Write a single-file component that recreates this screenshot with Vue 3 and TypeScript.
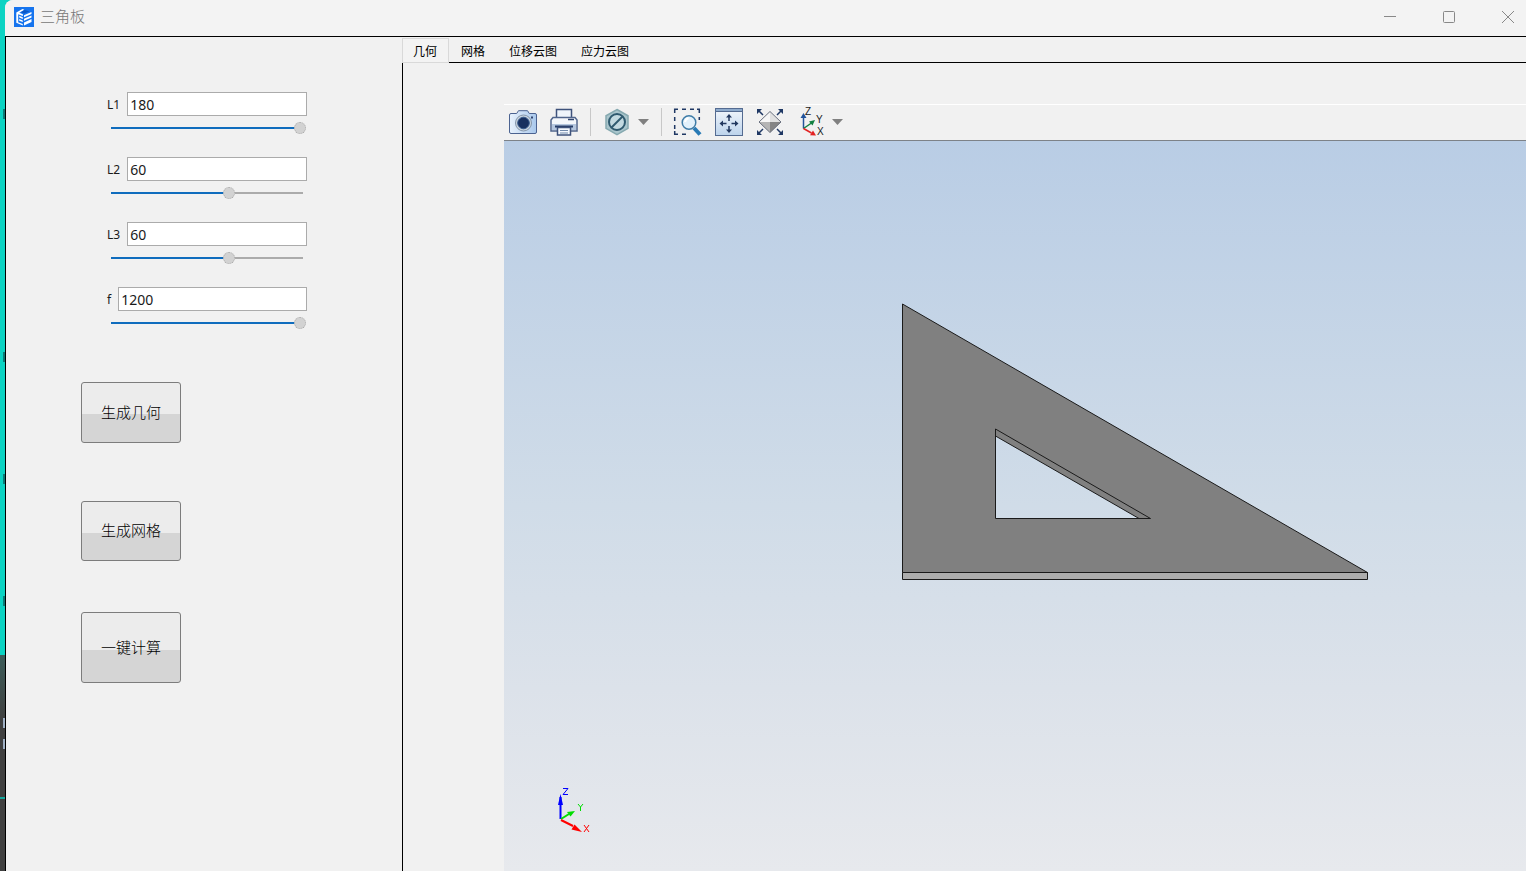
<script setup lang="ts">
import { reactive, ref } from 'vue'

interface Param {
  id: string
  value: number
  min: number
  max: number
}

const params = reactive<Param[]>([
  { id: 'L1', value: 180, min: 0, max: 180 },
  { id: 'L2', value: 60, min: 5, max: 95 },
  { id: 'L3', value: 60, min: 5, max: 95 },
  { id: 'f', value: 1200, min: 0, max: 1200 },
])

const tabs = ['几何', '网格', '位移云图', '应力云图']
const activeTab = ref(0)

const percent = (p: Param): string =>
  Math.round(((p.value - p.min) / (p.max - p.min)) * 100) + '%'
</script>

<template>
  <div class="desktop">
    <div class="backdrop" aria-hidden="true">
      <i class="mark m1"></i><i class="mark m2"></i><i class="mark m3"></i><i class="mark m4"></i>
      <i class="mark light m5"></i><i class="mark light m6"></i><i class="stripe"></i>
    </div>
    <div class="window">
      <header class="titlebar">
        <svg class="logo" viewBox="0 0 20 20" aria-hidden="true">
          <rect width="20" height="20" fill="#1674ee" />
          <path d="M2.300 5.600 8.500 2l1.800.8-5 3 3.600 1.400V9L4.200 7.200v8l4.600 1.900v1.500l-6.500-2.800z" fill="#fff" />
          <path d="m5.200 8.800 3.600 1.400v1.700l-3.600-1.400zM5.200 12l3.600 1.400v1.700l-3.600-1.400z" fill="#fff" />
          <path d="M10 8.200 17.500 5v2L10 10.200zM10 11.800l7.500-3.300v2L10 13.800zM10 15.500l7.500-3.500v3L10 18.400z" fill="#fff" />
          <path d="m10.500 3 5 1.200-5.200 2.200-3.500-1.100z" fill="#0b57c5" />
        </svg>
        <h1>三角板</h1>
        <div class="controls">
          <button type="button" aria-label="最小化">
            <svg viewBox="0 0 12 12"><path d="M0 5.500h12" /></svg>
          </button>
          <button type="button" aria-label="最大化">
            <svg viewBox="0 0 12 12"><rect x=".5" y=".5" width="11" height="11" rx="1" /></svg>
          </button>
          <button type="button" aria-label="关闭">
            <svg viewBox="0 0 12 12"><path d="m0 0 12 12M12 0 0 12" /></svg>
          </button>
        </div>
      </header>

      <div class="body">
        <aside class="panel">
          <div class="fields">
            <div v-for="p in params" :key="p.id" class="field">
              <div class="entry">
                <label :for="p.id">{{ p.id }}</label>
                <input :id="p.id" v-model.number="p.value" type="text" />
              </div>
              <input
                v-model.number="p.value"
                class="slider"
                type="range"
                :min="p.min"
                :max="p.max"
                :aria-label="p.id"
                :style="{ '--fill': percent(p) }"
              />
            </div>
          </div>
          <button type="button" class="action geometry">生成几何</button>
          <button type="button" class="action mesh">生成网格</button>
          <button type="button" class="action solve">一键计算</button>
        </aside>

        <main class="content">
          <nav class="tabs">
            <button
              v-for="(t, i) in tabs"
              :key="t"
              type="button"
              :class="{ active: i === activeTab }"
              @click="activeTab = i"
            >{{ t }}</button>
          </nav>
          <section class="page">
            <div class="viewer">
              <div class="toolbar">
                <div class="group">
                  <button type="button" aria-label="截图">
                    <svg viewBox="0 0 28 28">
                      <defs>
                        <linearGradient id="cam" x1="0" x2="1"><stop offset="0" stop-color="#e8f2fd" /><stop offset="1" stop-color="#a9c8ec" /></linearGradient>
                      </defs>
                      <path d="M2 5.500h5.700l1.800-2.800h9l1.800 2.800H26q1.500 0 1.500 1.500v17q0 1.500-1.500 1.500H2Q.5 25.500.5 24V7Q.5 5.500 2 5.500z" fill="url(#cam)" stroke="#4c6391" />
                      <circle cx="14.500" cy="15" r="8" fill="#c9d4df" stroke="#8496ab" />
                      <circle cx="14.500" cy="15" r="5.800" fill="#18305f" stroke="#35598c" />
                      <rect x="22" y="8.500" width="2" height="2" fill="#33466f" />
                    </svg>
                  </button>
                  <button type="button" aria-label="打印">
                    <svg viewBox="0 0 28 28">
                      <path d="M6.500 10V1.500h15V10" fill="#eef4fb" stroke="#3e527b" stroke-width="1.500" />
                      <path d="M3 9.500h22l2 2.500v11H1V12z" fill="#f4f7fb" stroke="#50658c" stroke-width="1.500" />
                      <path d="M2 16h24v6H2z" fill="#b5c7df" />
                      <path d="M18 11.500h6" stroke="#30466f" stroke-width="1.500" />
                      <path d="M5 18.500h18" stroke="#263d68" stroke-width="2" />
                      <path d="M7.500 19.500h13V27h-13z" fill="#f4f8fd" stroke="#3e527b" stroke-width="1.500" />
                      <path d="M10 22.500h8M10 25h8" stroke="#7189aa" />
                    </svg>
                  </button>
                </div>
                <span class="sep"></span>
                <div class="group tight">
                  <button type="button" aria-label="显示模式">
                    <svg viewBox="0 0 28 28">
                      <path d="m14 1.500 11 6.300v12.600L14 26.700 3 20.400V7.800z" fill="#a9c5cc" stroke="#86a9b0" stroke-width="1.500" />
                      <circle cx="14" cy="14" r="8" fill="#c3dae1" stroke="#2f5a6f" stroke-width="2" />
                      <path d="m8.500 19.500 11-11" stroke="#2f5a6f" stroke-width="2" />
                    </svg>
                  </button>
                  <button type="button" class="drop" aria-label="更多显示模式">
                    <svg viewBox="0 0 11 28"><path d="M0 11h11l-5.500 6z" fill="#808080" /></svg>
                  </button>
                </div>
                <span class="sep"></span>
                <div class="group">
                  <button type="button" aria-label="框选缩放">
                    <svg viewBox="0 0 28 28">
                      <path d="M.7 5V1.200H4M8 1.200h4M16 1.200h4M23 1.200h2.300V5M.7 9v4M.7 17v4M25.300 9v3M.7 23v3.300H4M8 26.300h4" fill="none" stroke="#1f3864" stroke-width="1.500" />
                      <path d="m20 20 6 6.500" stroke="#287ab5" stroke-width="4" />
                      <circle cx="15" cy="14.500" r="6.800" fill="#e2f1fb" stroke="#3f7ca7" stroke-width="1.500" />
                      <path d="M11 14q.5-3 3.500-4" stroke="#fff" stroke-width="2" fill="none" />
                    </svg>
                  </button>
                  <button type="button" aria-label="适应窗口">
                    <svg viewBox="0 0 28 28">
                      <defs>
                        <linearGradient id="fit" x2="0" y2="1"><stop offset="0" stop-color="#f3f7fc" /><stop offset="1" stop-color="#bcd3ec" /></linearGradient>
                      </defs>
                      <rect x=".5" y=".5" width="27" height="27" fill="url(#fit)" stroke="#546b91" />
                      <path d="M.5.5h27v3H.5z" fill="#8daacc" stroke="#546b91" />
                      <path d="M14 13V9M14 18v4M11.500 15.500H7M16.500 15.500H21" stroke="#22385f" stroke-width="1.500" />
                      <path d="m14 6 3 3.500h-6zM14 25l3-3.500h-6zM4.500 15.500 8 12.500v6zM23.500 15.500l-3.500-3v6z" fill="#22385f" />
                    </svg>
                  </button>
                  <button type="button" aria-label="等轴视图">
                    <svg viewBox="0 0 28 28">
                      <path d="m2 2 5 5M26 2l-5 5M2 26l5-5M26 26l-5-5" stroke="#1f3864" stroke-width="1.500" />
                      <path d="M1 1h5L1 6zM27 1h-5l5 5zM1 27h5l-5-5zM27 27h-5l5-5z" fill="#1f3864" />
                      <path d="m14 3.500 11 10.500-11 10.500L3 14z" fill="#e0e0e0" />
                      <path d="M14 3.500V14H3z" fill="#f6f6f6" /><path d="M3 14h11v10.500z" fill="#b5b5b5" /><path d="M14 14h11L14 24.500z" fill="#858585" />
                      <path d="m14 3.500 11 10.500-11 10.500L3 14z" fill="none" stroke="#6c7280" />
                    </svg>
                  </button>
                  <div class="group tight">
                    <button type="button" aria-label="坐标轴视图">
                      <svg viewBox="0 0 28 28">
                        <path d="M6.500 20.500V8" stroke="#23549c" stroke-width="1.500" /><path d="m6.500 5 3 5h-6z" fill="#23549c" />
                        <path d="m6.500 20.500 8-5.500" stroke="#118040" stroke-width="1.500" /><path d="m18 12-2.500 5.500-3.500-4z" fill="#118040" />
                        <path d="m6.500 20.500 8 4.500" stroke="#e32222" stroke-width="1.500" /><path d="m19 27.500-6-.3 3-4.700z" fill="#e32222" />
                        <g class="axis-name"><text x="8" y="7">Z</text><text x="19" y="15">Y</text><text x="20" y="27">X</text></g>
                      </svg>
                    </button>
                    <button type="button" class="drop" aria-label="更多视图">
                      <svg viewBox="0 0 11 28"><path d="M0 11h11l-5.500 6z" fill="#808080" /></svg>
                    </button>
                  </div>
                </div>
              </div>

              <div class="scene">
                <svg class="model" viewBox="0 0 1022 730" role="img" aria-label="三角板">
                  <g stroke="#1a1a1a" stroke-linejoin="round">
                    <path d="M398.500 431.500h465v7h-465z" fill="#adadad" />
                    <path d="M398.500 163v268.500h465zM491.500 295l143.500 82.500H491.500z" fill="#808080" fill-rule="evenodd" />
                    <path d="M491.500 295v-7l155 89.500H635" fill="none" />
                  </g>
                </svg>
                <svg class="triad" viewBox="0 0 40 50" aria-hidden="true">
                  <path d="M7.500 34V12" stroke="#00f" stroke-width="2" /><path d="M7.500 9 10 20H5z" fill="#00f" />
                  <path d="m8 34 8-5" stroke="#0d0" stroke-width="2" /><path d="m22 26-4.500 5.500-3.500-4.500z" fill="#0d0" />
                  <path d="m8 35 12 6" stroke="#f00" stroke-width="2" /><path d="m29 47-10.500-2.500 3-5z" fill="#f00" />
                  <path d="M10 3.500h5l-5 6h5" stroke="#00f" fill="none" />
                  <path d="m25 19 2.500 3 2.500-3M27.500 22v4" stroke="#0d0" fill="none" />
                  <path d="m31 40 5 7M36 40l-5 7" stroke="#f00" fill="none" />
                </svg>
              </div>
            </div>
          </section>
        </main>
      </div>
    </div>
  </div>
</template>

<style>
body {
  margin: 0;
}
</style>

<style scoped>
* {
  box-sizing: border-box;
}
button,
input {
  font: inherit;
  color: inherit;
  margin: 0;
}
.desktop {
  display: grid;
  grid-template-columns: 5px minmax(0, 1fr);
  min-height: 100vh;
  font-family: 'Noto Sans', 'Noto Sans CJK SC', sans-serif;
  color: #1a1a1a;
  background: linear-gradient(#0cd3c3 0 655px, #3c5c59 655px, #404040 720px);
}
.backdrop {
  position: relative;
}
.mark {
  position: absolute;
  right: 0;
  width: 2px;
  height: 10px;
  background: #0b7c78;
}
.m1 { top: 109px; }
.m2 { top: 352px; }
.m3 { top: 474px; }
.m4 { top: 596px; }
.m5 { top: 718px; }
.m6 { top: 739px; }
.light {
  background: #9fb0c4;
}
.stripe {
  position: absolute;
  top: 797px;
  left: 0;
  width: 5px;
  height: 2px;
  background: #16a89d;
}
.window {
  display: flex;
  flex-direction: column;
  background: #f1f1f1;
  border-top-left-radius: 8px;
}
.titlebar {
  display: flex;
  align-items: center;
  height: 36px;
  padding: 0 12px 2px 9px;
  background: #f3f3f3;
  border-top-left-radius: 8px;
}
.logo {
  width: 20px;
  height: 20px;
}
h1 {
  margin: 0 auto 0 6px;
  padding-bottom: 2px;
  font-size: 15px;
  line-height: 20px;
  font-weight: 300;
  color: #777;
}
.controls {
  display: flex;
  gap: 47px;
}
.controls button {
  padding: 0;
  border: 0;
  background: none;
}
.controls svg {
  display: block;
  width: 12px;
  height: 12px;
  fill: none;
  stroke: #888;
}
.body {
  flex: 1;
  display: grid;
  grid-template-columns: 396px minmax(0, 1fr);
  border-top: 1px solid #000;
  border-left: 1px solid #000;
}
.panel {
  padding: 55px 0 0 75px;
}
.fields {
  display: flex;
  flex-direction: column;
  gap: 23px;
  width: 200px;
  margin-left: 26px;
}
.entry {
  display: flex;
  align-items: center;
  gap: 7px;
}
label {
  padding-top: 1px;
  font-size: 12px;
  line-height: 23px;
}
.entry input {
  flex: 1;
  min-width: 0;
  height: 24px;
  padding: 1px 2px 0;
  font-size: 14px;
  background: #fff;
  border: 1px solid #ababab;
  outline: none;
}
.slider {
  appearance: none;
  display: block;
  width: 195px;
  height: 12px;
  margin: 6px 0 0 4px;
  background:
    linear-gradient(to right, #0f6cbd var(--fill), #ababab var(--fill)) 0 5px / 192px 2px no-repeat;
}
.slider::-webkit-slider-thumb {
  appearance: none;
  width: 12px;
  height: 12px;
  border: 1px dotted #aaa;
  border-radius: 50%;
  background: #d2d2d2;
}
.action {
  display: block;
  width: 100px;
  height: 60px;
  padding: 0 0 2px;
  font-size: 15px;
  line-height: 20px;
  font-weight: 300;
  color: #000;
  border: 1px solid #7c7c7c;
  border-radius: 3px;
  background: linear-gradient(#ececec 0 53%, #d5d5d5 53%);
}
.geometry {
  height: 61px;
  margin-top: 53px;
}
.mesh {
  margin-top: 58px;
}
.solve {
  height: 71px;
  margin-top: 51px;
}
.content {
  display: flex;
  flex-direction: column;
}
.tabs {
  display: flex;
  gap: 1px;
  height: 26px;
  padding-top: 1px;
  border-bottom: 1px solid #000;
}
.tabs button {
  padding: 2px 12px 0 11px;
  height: 25px;
  font-size: 12px;
  line-height: 22px;
  color: #000;
  border: 0;
  background: none;
}
.tabs .active {
  box-shadow: inset 0 0 0 1px #d9d9d9;
  background: #f3f3f3;
}
.page {
  flex: 1;
  display: flex;
  padding: 41px 0 0 101px;
  border-left: 1px solid #000;
}
.viewer {
  flex: 1;
  display: flex;
  flex-direction: column;
}
.toolbar {
  display: flex;
  gap: 12px;
  height: 37px;
  padding: 3px 5px;
  border-top: 1px solid #fff;
  border-bottom: 1px solid #7d8288;
  background: #f1f1f1;
}
.group {
  display: flex;
  gap: 13px;
}
.tight {
  gap: 7px;
}
.toolbar button {
  width: 28px;
  height: 28px;
  padding: 0;
  border: 0;
  background: none;
}
.toolbar .drop {
  width: 11px;
}
.toolbar svg {
  display: block;
  width: 100%;
  height: 28px;
  overflow: visible;
}
.sep {
  width: 1px;
  height: 28px;
  background: #c8c8c8;
}
.axis-name {
  font: 10px 'Liberation Sans', sans-serif;
  fill: #222;
}
.scene {
  position: relative;
  flex: 1;
  background: linear-gradient(#b9cde5, #d0dce8 50%, #dce2ea 75%, #e7e9ed);
}
.model {
  position: absolute;
  inset: 0;
  width: 100%;
  height: 100%;
}
.triad {
  position: absolute;
  left: 49px;
  bottom: 36px;
  width: 40px;
  height: 50px;
}
</style>
